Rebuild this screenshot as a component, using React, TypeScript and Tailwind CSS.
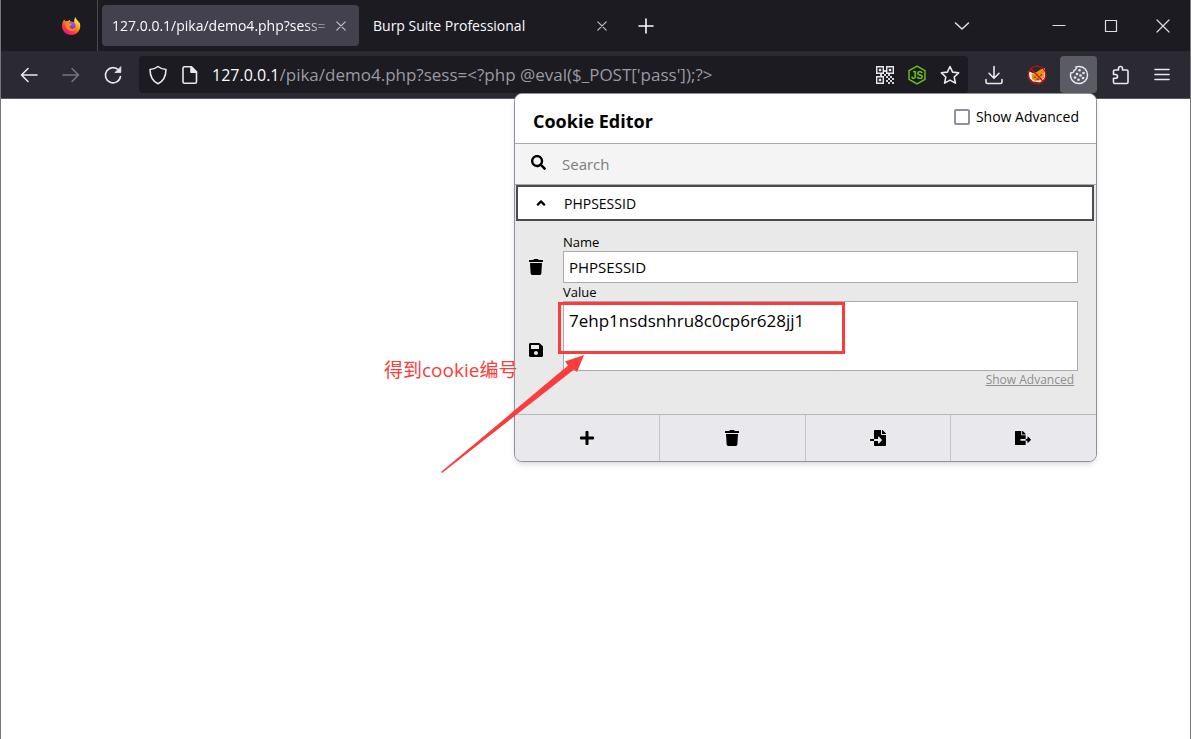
import { useState, type ReactNode } from "react";
import { FaAngleUp, FaFileExport, FaFileImport, FaPlus, FaSave, FaSearch, FaTrash } from "react-icons/fa";

const tabs = [
  { title: "127.0.0.1/pika/demo4.php?sess=", active: true },
  { title: "Burp Suite Professional", active: false },
];

const actions = [
  { label: "Add cookie", icon: <FaPlus className="size-4" /> },
  { label: "Delete all", icon: <FaTrash className="size-4" /> },
  { label: "Import", icon: <FaFileImport className="size-4" /> },
  { label: "Export", icon: <FaFileExport className="size-4" /> },
];

function Line({ children, className = "size-5", width = 1.6 }: { children: ReactNode; className?: string; width?: number }) {
  return (
    <svg viewBox="0 0 20 20" className={className} fill="none" stroke="currentColor" strokeWidth={width} strokeLinecap="round" strokeLinejoin="round">
      {children}
    </svg>
  );
}

function FirefoxLogo() {
  return (
    <svg viewBox="0 0 20 20" className="size-5">
      <defs>
        <linearGradient id="ff" x1="0.85" y1="0.1" x2="0.25" y2="0.95">
          <stop offset="0" stopColor="#fff44f" />
          <stop offset="0.4" stopColor="#ff980e" />
          <stop offset="0.72" stopColor="#ff3647" />
          <stop offset="1" stopColor="#e31587" />
        </linearGradient>
        <linearGradient id="ffglobe" x1="0.6" y1="0" x2="0.4" y2="1">
          <stop offset="0" stopColor="#a45bf5" />
          <stop offset="1" stopColor="#5b3fd6" />
        </linearGradient>
      </defs>
      <path fill="url(#ff)" d="M3.3 3.4c.3 1 .7 1.5 1.2 1.9.9-.3 1.8-.3 2.6 0 .5-.9 1.3-1.6 2.2-1.9-.5.8-.4 1.6.2 2.1l3.7.8c-.2-2 .3-3.9 1.2-5.3.4 1.9 1.7 2.7 2.7 4.1.5.7.8 1.3.9 1.9.2-.3.2-.8.1-1.2 1 1.7 1.3 3.4 1.1 5.2-.5 4.7-4.3 8-9 8-5.200 0-9.200-4-9.200-9 0-2.600.8-5 2.300-6.600z" />
      <circle cx="10.6" cy="9.8" r="4" fill="url(#ffglobe)" />
      <path fill="#ff8a16" d="M4.5 7.2c1.8-1 3.3-.7 4.3.2.9.1 1.7.2 2.2.6-.2.9-1.2 1.3-2.1 1.7-.6 1.5.3 3 2 3.2 1.5.2 2.3-.9 3.6-.5-1 1.9-2.8 2.7-4.8 2.3-3.500-.600-5.600-3.700-5.200-7.500z" />
    </svg>
  );
}

function QrIcon() {
  return (
    <svg viewBox="0 0 18 18" className="size-[18px]" fill="currentColor">
      {[[0, 0], [10, 0], [0, 10]].map(([x, y]) => (
        <g key={`${x}-${y}`}>
          <path fillRule="evenodd" d={`M${x} ${y}h8v8h-8zM${x + 1.4} ${y + 1.4}v5.2h5.2v-5.2z`} />
          <rect x={x + 2.8} y={y + 2.8} width="2.4" height="2.4" />
        </g>
      ))}
      <path d="M10 10h2v2h-2zM14 10h2v2h-2zM12 12h2v2h-2zM16 12h2v2h-2zM10 14h2v2h-2zM14 14h2v2h-2zM12 16h2v2h-2zM16 16h2v2h-2zM8 4h2v2h-2zM4 8h2v2h-2zM8 8h2v2h-2zM12 8h2v2h-2z" opacity="0.9" />
    </svg>
  );
}

function NodeIcon() {
  return (
    <svg viewBox="0 0 20 20" className="size-5" fill="none" stroke="#6cc417" strokeWidth="1.4" strokeLinejoin="round">
      <path d="M10 1.2l8 4.5v8.600l-8 4.500-8-4.500V5.700z" />
      <text x="10" y="13.600" textAnchor="middle" fontSize="10" fontWeight="bold" fontFamily="Liberation Sans" fill="#6cc417" stroke="none">JS</text>
    </svg>
  );
}

function FoxBlocked() {
  return (
    <svg viewBox="0 0 20 20" className="size-5">
      <path fill="#f4f4f4" d="M1.500 6l4 2 4.500-.5L17.500 3l1 6-1 5-4.500 3.500-7-1L2.500 13z" />
      <path fill="#f08c10" d="M4.500 9l4.500-1.500L14 4l3.500 2-.5 6.500-4 3-5 .5-3-2z" />
      <path stroke="#4a2c10" fill="none" d="M7 12l2 .5M13 10.500l2-1M9.500 14.500l2.500-.5" />
      <circle cx="10" cy="10" r="8.800" fill="none" stroke="#c80d0d" strokeWidth="1.300" />
      <path d="M3.800 3.800l12.400 12.400" stroke="#c80d0d" strokeWidth="1.300" />
    </svg>
  );
}

function CookieIcon() {
  return (
    <Line width={1.5}>
      <path d="M10.500 1.500C8.500 1.400 7 2 7 2c.5 1.800-.2 3-2 3.200.1 1.800-1 2.800-3.100 2.600-1.600 5.500 2.400 10.700 8.100 10.700 4.800 0 8.500-3.800 8.500-8.500 0-4.600-3.500-8.300-8-8.500z" />
      <g fill="currentColor" stroke="none">
        <circle cx="10.500" cy="5.200" r="1.300" />
        <circle cx="8" cy="9" r="1.300" />
        <circle cx="14.500" cy="8" r="1.300" />
        <circle cx="11.500" cy="10.500" r="1.300" />
        <circle cx="6" cy="12.500" r="1.300" />
        <circle cx="9.500" cy="14.800" r="1.300" />
        <circle cx="14" cy="13" r="1.300" />
      </g>
    </Line>
  );
}

function TabStrip() {
  return (
    <div className="flex h-[51px] items-center bg-[#1c1b22]">
      <div className="flex h-full w-[97px] items-center justify-end border-r border-[#4a4952] pr-4">
        <FirefoxLogo />
      </div>
      <div className="flex gap-1 pl-1">
        {tabs.map((tab) => (
          <div key={tab.title} className={`flex h-[41px] w-[257px] items-center rounded pr-3 pl-[10px] ${tab.active ? "bg-[#42414d]" : ""}`}>
            <span className={`flex-1 whitespace-nowrap text-sm text-[#fbfbfe] ${tab.active ? "[mask-image:linear-gradient(to_left,transparent,black_32px)]" : ""}`}>{tab.title}</span>
            <button aria-label="Close tab" className="text-[#c8c8d0]">
              <Line className="size-3" width={1.8}><path d="M3 3l14 14M17 3L3 17" /></Line>
            </button>
          </div>
        ))}
      </div>
      <button aria-label="New tab" className="ml-4 text-[#fbfbfe]">
        <Line><path d="M10 3v14M3 10h14" /></Line>
      </button>
      <div className="ml-auto flex items-center text-[#dcdce2]">
        <button aria-label="List all tabs" className="mr-[77px]">
          <Line><path d="M3.500 7l6.500 6 6.500-6" /></Line>
        </button>
        <div className="flex gap-8 pr-[17px]">
          <button aria-label="Minimize"><Line width={1.2}><path d="M4 9.500h12" /></Line></button>
          <button aria-label="Maximize"><Line width={1.2}><path d="M4.500 4.500h11v11h-11z" /></Line></button>
          <button aria-label="Close"><Line width={1.2}><path d="M4 4l12 12M16 4L4 16" /></Line></button>
        </div>
      </div>
    </div>
  );
}

function NavBar() {
  return (
    <div className="flex h-12 items-center border-b border-[#5a5960] bg-[#2b2a33] text-[#e8e8ee]">
      <div className="flex w-[138px] gap-[22px] pl-[18px]">
        <button aria-label="Back"><Line><path d="M18 10H2.500M9 3.500L2.500 10 9 16.500" /></Line></button>
        <button aria-label="Forward" className="text-[#76757e]"><Line><path d="M2 10h15.500M11 3.500l6.500 6.500-6.500 6.500" /></Line></button>
        <button aria-label="Reload">
          <Line>
            <path d="M17.500 11.500A7.600 7.600 0 1 1 15.500 5" />
            <path d="M17.800 2v5.500h-5.500z" fill="currentColor" strokeWidth="0.8" />
          </Line>
        </button>
      </div>
      <div className="flex h-[37px] flex-1 items-center rounded bg-[#1c1b22] pr-2 pl-[9px]">
        <Line><path d="M10 1.500c2.500 2 5 2.800 8 3-.1 6-2 11.500-8 14.200C4 16 2.100 10.500 2 4.500c3-.2 5.500-1 8-3z" /></Line>
        <Line className="ml-3 size-5"><path d="M4.500 1.800h7l5 5v10c0 1-.5 1.500-1.500 1.500H4.500C3.500 18.300 3 17.800 3 16.800V3.300c0-1 .5-1.500 1.500-1.500z" /><path d="M11 2v5.200h5.300z" fill="currentColor" /></Line>
        <label htmlFor="url" className="ml-3 text-base text-[#fbfbfe]">127.0.0.1</label>
        <input id="url" defaultValue="/pika/demo4.php?sess=<?php @eval($_POST['pass']);?>" className="min-w-0 flex-1 bg-transparent text-[17px] text-[#9a9aa2] outline-none" />
        <div className="flex items-center gap-[13px]">
          <button aria-label="QR code"><QrIcon /></button>
          <button aria-label="Node"><NodeIcon /></button>
          <button aria-label="Bookmark"><Line><path d="M10 1.500l2.600 5.600 6 .7-4.400 4.200 1.200 6.100L10 15.100l-5.400 3 1.200-6.100L1.400 7.800l6-.7z" /></Line></button>
        </div>
      </div>
      <div className="flex items-center pr-[18px] pl-4">
        <button aria-label="Downloads"><Line><path d="M10 1.500V13M5 8.300l5 5 5-5M2 14.500v2.500c0 1 .6 1.500 1.500 1.500h13c1 0 1.500-.6 1.500-1.500v-2.500" /></Line></button>
        <button aria-label="FoxyProxy" className="ml-[23px]"><FoxBlocked /></button>
        <button aria-label="Cookie Editor" className="ml-[13px] flex size-[37px] items-center justify-center rounded bg-[#5b5b66]"><CookieIcon /></button>
        <button aria-label="Extensions" className="ml-[14px]">
          <Line><path d="M7.500 5V3.500c0-1.200.9-2 2-2s2 .8 2 2V5h4.200c.8 0 1.300.5 1.300 1.300v10.900c0 .8-.5 1.300-1.300 1.300H3.800c-.8 0-1.300-.5-1.300-1.300v-4h2c1.200 0 2-.8 2-1.800s-.8-1.900-2-1.900h-2V6.300c0-.8.5-1.300 1.300-1.300z" /></Line>
        </button>
        <button aria-label="Menu" className="ml-[21px]"><Line><path d="M3 4.500h14M3 9.500h14M3 14.500h14" /></Line></button>
      </div>
    </div>
  );
}

function CookiePopup() {
  const [advanced, setAdvanced] = useState(false);

  return (
    <div className="flex flex-col overflow-hidden rounded-lg border border-[#8f8f9d] bg-[#e9e9e9] text-black shadow-md">
      <div className="flex h-[49px] items-center justify-between bg-white pt-1 pr-[17px] pl-[18px]">
        <h1 className="text-lg font-bold">Cookie Editor</h1>
        <label className="mb-2 flex items-center gap-[6px] text-sm">
          <input type="checkbox" checked={advanced} onChange={(e) => setAdvanced(e.target.checked)} className="size-4 appearance-none rounded-xs border-2 border-[#8f8f9d] bg-white checked:bg-[#0060df]" />
          Show Advanced
        </label>
      </div>
      <div className="flex h-[42px] items-center border-y border-[#aaaaaa] bg-[#f4f4f4] pl-4">
        <FaSearch className="mb-1 size-[15px]" />
        <input type="search" aria-label="Search" placeholder="Search" className="ml-4 flex-1 bg-transparent text-[15px] outline-none placeholder:text-[#7c7c7c]" />
      </div>
      <div className="pr-[2px] pl-px">
        <button className="flex h-9 w-full items-center border-2 border-[#4a4a4f] bg-white pl-4 text-left text-sm">
          <FaAngleUp className="size-[14px]" />
          <span className="ml-4 pt-[2px]">PHPSESSID</span>
        </button>
      </div>
      <div className="flex h-[193px] pt-3 pr-[18px] pl-[13px]">
        <div className="flex w-[35px] flex-col pt-[26px]">
          <button aria-label="Delete"><FaTrash className="size-4" /></button>
          <button aria-label="Save" className="mt-[67px]"><FaSave className="size-4" /></button>
        </div>
        <div className="flex min-w-0 flex-1 flex-col">
          <label htmlFor="name" className="text-[13px] leading-[18px]">Name</label>
          <input id="name" defaultValue="PHPSESSID" className="h-8 border border-[#aaaaaa] bg-white px-[5px] text-[15px] outline-none" />
          <label htmlFor="value" className="text-[13px] leading-[18px]">Value</label>
          <textarea id="value" defaultValue="7ehp1nsdsnhru8c0cp6r628jj1" className="h-[70px] resize-none border border-[#aaaaaa] bg-white px-[5px] py-[6px] text-[17px] outline-none" />
          <a href="#advanced" className="mr-1 self-end text-xs leading-[18px] text-[#8f8f8f] underline">Show Advanced</a>
        </div>
      </div>
      <div className="grid h-[47px] grid-cols-4 border-t border-[#b8b8b8] bg-[#e8e8ed]">
        {actions.map((a) => (
          <button key={a.label} aria-label={a.label} className="flex items-center justify-center border-r border-[#c4c4c8] last:border-r-0">{a.icon}</button>
        ))}
      </div>
    </div>
  );
}

export default function App() {
  return (
    <div className="relative flex min-h-screen flex-col border-x border-[#777777] bg-white font-['Open_Sans','Noto_Sans_CJK_SC',sans-serif]">
      <TabStrip />
      <NavBar />
      <main className="flex-1" />
      <div className="absolute top-[93px] right-[93px] w-[583px]">
        <CookiePopup />
        {/* hand-drawn notes over the popup */}
        <div className="absolute top-[209px] left-11 h-[52px] w-[287px] border-3 border-[#fa3c3c]" />
        <svg viewBox="0 0 146 120" className="pointer-events-none absolute top-[261px] -left-[74px] h-[120px] w-[146px]" fill="#fa3c3c">
          <path d="M1 118L128 11.500 125 7.500 144 1 137 18 134 15.500 2 119z" />
        </svg>
        <p className="absolute top-[263px] -left-[130px] text-[19px] leading-7 whitespace-nowrap text-[#fa3c3c]">得到cookie编号</p>
      </div>
    </div>
  );
}
